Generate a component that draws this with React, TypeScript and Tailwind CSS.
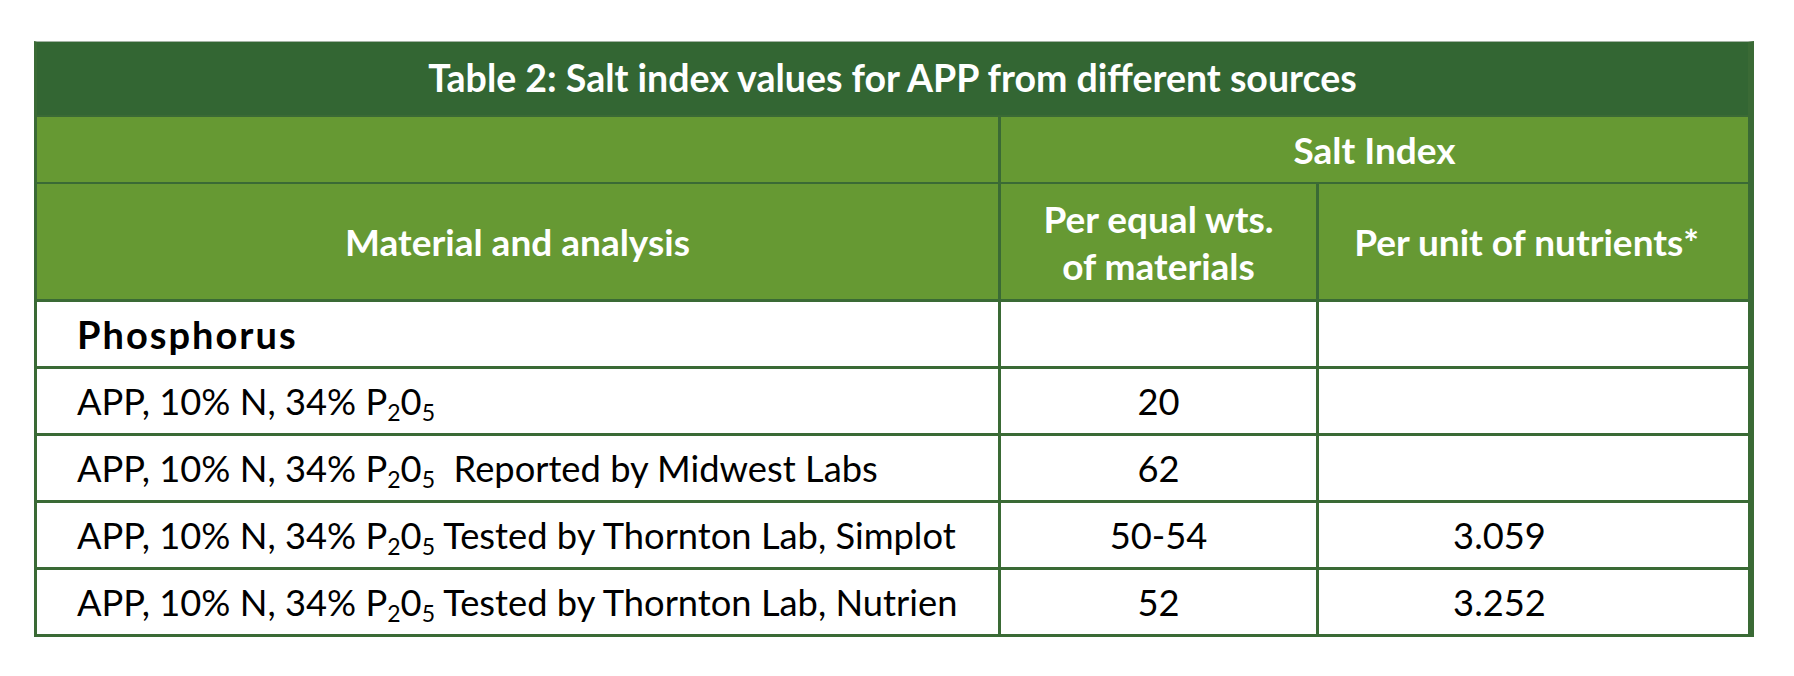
const rows = [
  { source: "", per: "20", unit: "" },
  { source: "  Reported by Midwest Labs", per: "62", unit: "" },
  { source: " Tested by Thornton Lab, Simplot", per: "50-54", unit: "3.059" },
  { source: " Tested by Thornton Lab, Nutrien", per: "52", unit: "3.252" },
];

function Analysis({ source }: { source: string }) {
  return (
    <span className="whitespace-pre">
      APP, 10% N, 34% P<sub className="text-[23px]">2</sub>0
      <sub className="text-[23px]">5</sub>
      {source}
    </span>
  );
}

export default function App() {
  return (
    <div className="min-h-[676px] w-[1794px] bg-white pt-[41px] pl-[34px] font-['Lato','Liberation_Sans',sans-serif]">
      <div className="w-[1720px] border-t border-t-[#a3b3a3] border-l-[3px] border-r-[6px] border-b-[3px] border-l-[#3a6a35] border-r-[#3a6a35] border-b-[#3a6a35]">
        {/* title */}
        <div className="flex h-[73px] items-center justify-center bg-[#336633] text-[37.5px] font-bold text-white">
          Table 2: Salt index values for APP from different sources
        </div>

        {/* group header */}
        <div className="grid h-[67px] grid-cols-[961px_1fr] border-t-2 border-[#3a6a35] bg-[#669933] text-[37px] font-bold text-white">
          <div />
          <div className="flex items-center justify-center border-l-[3px] border-[#3a6a35]">
            Salt Index
          </div>
        </div>

        {/* column headers */}
        <div className="grid h-[117px] grid-cols-[961px_318px_1fr] border-t-2 border-[#3a6a35] bg-[#669933] text-[37px] font-bold text-white">
          <div className="flex items-center justify-center">Material and analysis</div>
          <div className="flex flex-col items-center justify-center border-l-[3px] border-[#3a6a35] leading-[47px]">
            <span>Per equal wts.</span>
            <span>of materials</span>
          </div>
          <div className="flex items-center justify-center border-l-[3px] border-[#3a6a35] pr-[14px]">
            Per unit of nutrients*
          </div>
        </div>

        {/* body */}
        <div className="grid h-[67px] grid-cols-[961px_318px_1fr] border-t-[3px] border-[#3a6a35] text-[36px] text-black">
          <div className="flex items-center pl-[40px] text-[38px] font-bold tracking-[2px]">Phosphorus</div>
          <div className="border-l-[3px] border-[#3a6a35]" />
          <div className="border-l-[3px] border-[#3a6a35]" />
        </div>
        {rows.map((row) => (
          <div
            key={row.source + row.per}
            className="grid h-[67px] grid-cols-[961px_318px_1fr] border-t-[3px] border-[#3a6a35] text-[36.3px] text-black"
          >
            <div className="flex items-center pl-[40px]">
              <Analysis source={row.source} />
            </div>
            <div className="flex items-center justify-center border-l-[3px] border-[#3a6a35]">
              {row.per}
            </div>
            <div className="flex items-center justify-center border-l-[3px] border-[#3a6a35] pr-[68px]">
              {row.unit}
            </div>
          </div>
        ))}
      </div>
    </div>
  );
}
